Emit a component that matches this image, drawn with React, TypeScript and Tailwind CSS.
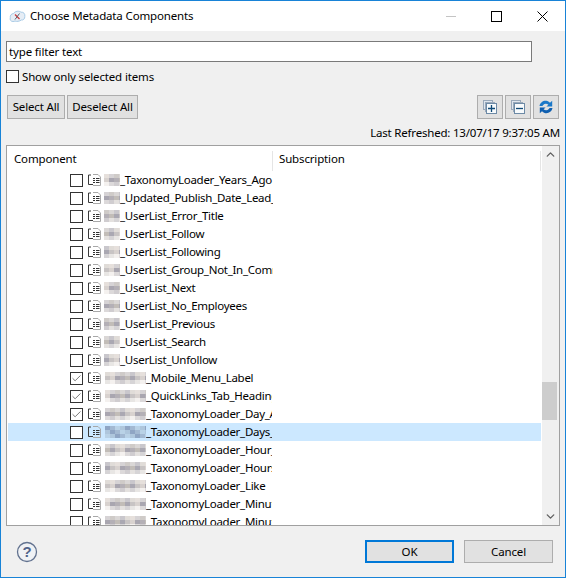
import { Check, ChevronDown, ChevronUp } from "lucide-react";

const rows = [
  { blur: "short", text: "_TaxonomyLoader_Years_Ago" },
  { blur: "short", text: "_Updated_Publish_Date_Lead_In" },
  { blur: "short", text: "_UserList_Error_Title" },
  { blur: "short", text: "_UserList_Follow" },
  { blur: "short", text: "_UserList_Following" },
  { blur: "short", text: "_UserList_Group_Not_In_Community" },
  { blur: "short", text: "_UserList_Next" },
  { blur: "short", text: "_UserList_No_Employees" },
  { blur: "short", text: "_UserList_Previous" },
  { blur: "short", text: "_UserList_Search" },
  { blur: "short", text: "_UserList_Unfollow" },
  { blur: "long", text: "_Mobile_Menu_Label", checked: true },
  { blur: "long", text: "_QuickLinks_Tab_Heading", checked: true },
  { blur: "long", text: "_TaxonomyLoader_Day_Ago", checked: true },
  { blur: "long", text: "_TaxonomyLoader_Days_Ago", selected: true },
  { blur: "long", text: "_TaxonomyLoader_Hour_Ago" },
  { blur: "long", text: "_TaxonomyLoader_Hours_Ago" },
  { blur: "long", text: "_TaxonomyLoader_Like" },
  { blur: "long", text: "_TaxonomyLoader_Minute_Ago" },
  { blur: "long", text: "_TaxonomyLoader_Minutes_Ago" },
];

const top = ["#e6e0dc", "#d6d3d5", "#cfcbc8", "#dad7d6", "#c9c7cc", "#e0dcd8"];
const middle = ["#d8d2cf", "#a9a6b0", "#b4b0b6", "#c2bdb8", "#aaa8b2", "#c8c4c4"];
const bottom = ["#f4f1ef", "#dcd9da", "#d0cdd0", "#e4e1df", "#d6d4d6", "#e8e6e4"];
const selectedShades = ["#b9d2e6", "#a3b9d2", "#8fa5c4", "#aec6dc"];

// pixelated patch standing in for the blurred prefix of each name
function Mosaic({ width, seed, selected }: { width: number; seed: number; selected?: boolean }) {
  const cells = [];
  for (let y = 0; y < 3; y++) {
    const palette = [top, middle, bottom][y];
    for (let x = 0; x * 5 < width; x++) {
      const fill = selected ? selectedShades[(x * 3 + y + seed) % 4] : palette[(x + seed) % 6];
      cells.push(<rect key={`${x}-${y}`} x={x * 5} y={y * 4} width={5} height={4} fill={fill} />);
    }
  }
  return (
    <svg width={width} height={12} className="shrink-0">
      {cells}
    </svg>
  );
}

function ComponentIcon() {
  return (
    <svg width={14} height={14} viewBox="0 0 14 14" className="shrink-0" fill="none">
      <path d="M5 1.5H10L12.5 4V12.5H5" stroke="#a8a8a8" />
      <path d="M0.5 2V11.5H5M0.5 2H3" stroke="#3a3a3a" />
      <path d="M5 5.5H7M8 5.5H11.5M5 7.5H7M8 7.5H11.5M5 9.5H7M8 9.5H11.5" stroke="#333333" />
    </svg>
  );
}

function Box({ checked }: { checked?: boolean }) {
  return (
    <span className="flex h-[13px] w-[13px] shrink-0 items-center justify-center border border-[#333333] bg-white">
      {checked && <Check size={11} strokeWidth={1.6} className="text-[#444444]" />}
    </span>
  );
}

function ToolButton({ children }: { children: React.ReactNode }) {
  return <button className="flex h-[24px] w-[26px] items-center justify-center border border-[#adadad] bg-[#e1e1e1]">{children}</button>;
}

function TreeIcon({ sign }: { sign: "plus" | "minus" }) {
  return (
    <svg width={14} height={14} viewBox="0 0 14 14" fill="none">
      <rect x="0.5" y="0.5" width="9" height="9" fill="#dfe6ee" stroke="#9aa9ba" />
      <rect x="2.5" y="2.5" width="9" height="9" fill="#e8edf3" stroke="#9aa9ba" />
      <rect x="3.5" y="3.5" width="10" height="10" fill="#f7fafc" stroke="#6d8aa6" />
      <path d={sign === "plus" ? "M5 8.5H12M8.5 5V12" : "M5 8.5H12"} stroke="#0f4a78" strokeWidth="1.3" />
    </svg>
  );
}

function RefreshIcon() {
  return (
    <svg width={16} height={16} viewBox="0 0 16 16" fill="none">
      <path d="M1.5 7C2.2 3.2 6 1 9.4 2.1C10.4 2.4 11.2 3 12 3.8L14.2 1.8V7.6H8.4L10.4 5.8C9 4.5 6.6 4.4 5.2 6C4.8 6.4 4.6 6.7 4.5 7Z" fill="#1b78c8" />
      <path d="M14.5 9C13.8 12.8 10 15 6.6 13.9C5.6 13.6 4.8 13 4 12.2L1.8 14.2V8.4H7.6L5.6 10.2C7 11.5 9.4 11.6 10.8 10C11.2 9.6 11.4 9.3 11.5 9Z" fill="#0f5fb0" />
    </svg>
  );
}

function AppIcon() {
  return (
    <svg width={17} height={15} viewBox="0 0 17 15" fill="none">
      <path d="M4 12.5C1.5 12.5 0.7 10.5 1.3 8.8C0.8 6.5 2.5 4.5 4.5 4.6C6 2 10 1.5 12 3.2C14.5 2.8 16.4 5 15.8 7.5C16 9.8 14.2 11.4 12.3 11C10.5 12.4 7.5 12.8 6 12C5.4 12.4 4.7 12.5 4 12.5Z" fill="#e6edf5" stroke="#a9cbe6" />
      <path d="M6 5.5L10.5 10" stroke="#c8383a" strokeWidth="1.2" />
      <path d="M10.5 4.5L6 10.5" stroke="#5a6472" strokeWidth="1" />
    </svg>
  );
}

export default function App() {
  return (
    <div className="flex h-[578px] w-[566px] flex-col overflow-hidden border border-[#1883d7] bg-[#f0f0f0] font-['Noto_Sans',sans-serif] text-[11.5px] leading-[16px] tracking-[-0.15px] text-black">
      <div className="flex h-[30px] shrink-0 items-center bg-white pl-[8px]">
        <AppIcon />
        <span className="ml-[4px] flex-1">Choose Metadata Components</span>
        <span className="flex h-[30px] w-[46px] items-center justify-center">
          <span className="h-px w-[10px] bg-[#c4c4c4]" />
        </span>
        <span className="flex h-[30px] w-[45px] items-center justify-center">
          <span className="h-[11px] w-[11px] border border-black" />
        </span>
        <span className="flex h-[30px] w-[46px] items-center justify-center">
          <svg width={11} height={11} viewBox="0 0 11 11" stroke="black" fill="none">
            <path d="M0.5 0.5L10.5 10.5M10.5 0.5L0.5 10.5" />
          </svg>
        </span>
      </div>

      <div className="flex min-h-0 flex-1 flex-col px-[5px]">
        <div className="mt-[10px] flex h-[21px] w-[526px] shrink-0 items-center border border-[#7a7a7a] bg-white px-[2px]">type filter text</div>

        <label className="mt-[7px] flex h-[15px] shrink-0 items-center gap-[3px]">
          <Box />
          Show only selected items
        </label>

        <div className="mt-[11px] flex h-[24px] shrink-0 pl-[1px]">
          <button className="w-[58px] border border-[#adadad] bg-[#e1e1e1]">Select All</button>
          <button className="ml-[2px] w-[71px] border border-[#adadad] bg-[#e1e1e1]">Deselect All</button>
          <div className="ml-auto flex gap-[2px] pr-[1px]">
            <ToolButton>
              <TreeIcon sign="plus" />
            </ToolButton>
            <ToolButton>
              <TreeIcon sign="minus" />
            </ToolButton>
            <ToolButton>
              <RefreshIcon />
            </ToolButton>
          </div>
        </div>

        <div className="mt-[6px] h-[16px] shrink-0 text-right tracking-[-0.2px]">Last Refreshed: 13/07/17 9:37:05 AM</div>

        <div className="mt-[4px] flex h-[381px] w-[554px] shrink-0 overflow-hidden border border-[#a0a0a0] bg-white">
          <div className="flex min-w-0 flex-1 flex-col pl-[1px] pr-px">
            <div className="flex h-[25px] shrink-0 pt-[5px]">
              <div className="h-[20px] w-[265px] shrink-0 border-r border-[#e5e5e5] pl-[6px]">Component</div>
              <div className="h-[20px] flex-1 border-r border-[#e5e5e5] pl-[6px]">Subscription</div>
            </div>
            <div className="min-h-0 flex-1 overflow-hidden">
              {rows.map((row, i) => (
                <div key={row.text} className={`flex h-[18px] items-center pl-[62px] ${row.selected ? "bg-[#cce8ff]" : ""}`}>
                  <Box checked={row.checked} />
                  <span className="ml-[5px]">
                    <ComponentIcon />
                  </span>
                  <span className={row.blur === "long" ? "ml-[3px]" : "ml-[2px]"}>
                    <Mosaic width={row.blur === "long" ? 41 : 16} seed={i} selected={row.selected} />
                  </span>
                  <span className={`shrink-0 overflow-hidden whitespace-nowrap tracking-[-0.28px] ${row.blur === "long" ? "w-[126px]" : "w-[153px]"}`}>{row.text}</span>
                </div>
              ))}
            </div>
          </div>
          <div className="relative flex w-[17px] shrink-0 flex-col items-center justify-between bg-[#f0f0f0] py-[2px]">
            <ChevronUp size={13} strokeWidth={2.5} className="text-[#606060]" />
            <div className="absolute left-0 top-[236px] h-[38px] w-[15px] bg-[#cdcdcd]" />
            <ChevronDown size={13} strokeWidth={2.5} className="text-[#606060]" />
          </div>
        </div>

        <div className="flex flex-1 items-center justify-between pl-[10px] pr-[6px]">
          <svg width={22} height={22} viewBox="0 0 22 22" fill="none">
            <circle cx="11" cy="11" r="9.5" fill="#f0f2f5" stroke="#62728f" strokeWidth="1.3" />
            <text x="11" y="16" textAnchor="middle" fontSize="15" fontWeight="700" fontFamily="Liberation Sans, sans-serif" fill="#52648a">?</text>
          </svg>
          <div className="flex gap-[10px] pr-px">
            <button className="h-[23px] w-[89px] border-2 border-[#0078d7] bg-[#e1e1e1]">OK</button>
            <button className="h-[23px] w-[89px] border border-[#adadad] bg-[#e1e1e1]">Cancel</button>
          </div>
        </div>
      </div>
    </div>
  );
}
